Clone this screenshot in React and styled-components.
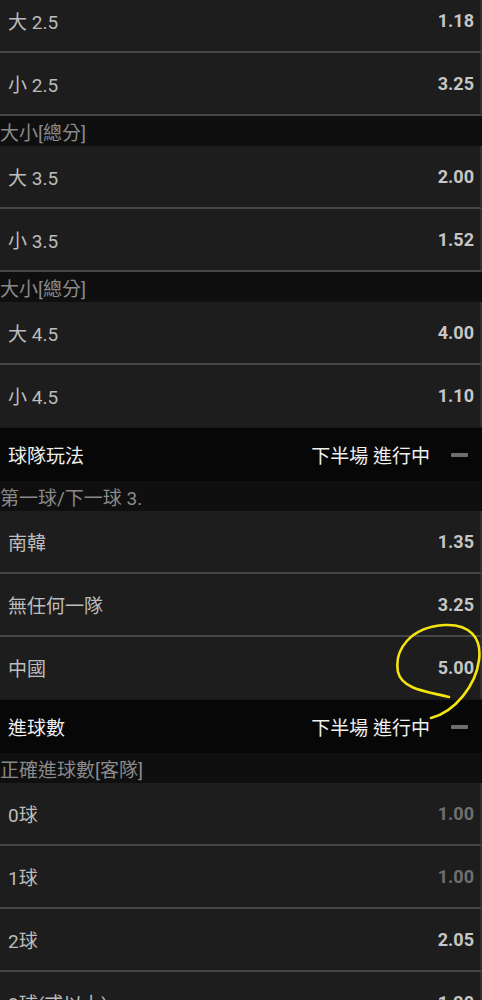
import React from 'react'
import styled, { createGlobalStyle } from 'styled-components'

const GlobalStyle = createGlobalStyle`
	body {
		margin: 0;
		background: #1d1d1d;
		font-family: Roboto, "Noto Sans CJK TC", "Noto Sans", sans-serif;
	}
`

const Page = styled.div`
	position: relative;
	width: 482px;
	height: 1000px;
	overflow: hidden;
	background: #1d1d1d;
`

const List = styled.div`
	margin-top: -10px;
	display: flex;
	flex-direction: column;
`

const Row = styled.div`
	display: flex;
	align-items: center;
	justify-content: space-between;
	height: 61px;
	padding: 0 6px 0 8px;
	background: #1d1d1d;
	border-bottom: 2px solid ${({ last }) => (last ? '#1a1a1a' : '#464646')};
	border-right: 2px solid #2e2e2e;
`

const Label = styled.span`
	font-size: 19px;
	color: #bcbcbc;
`

const Odds = styled.span`
	font-size: 18px;
	font-weight: 700;
	color: ${({ dim }) => (dim ? '#6f6f6f' : '#c6c6c6')};
`

const SubHeader = styled.div`
	display: flex;
	align-items: center;
	height: 30px;
	background: #0f0f0f;
	font-size: 19px;
	color: #8a8a8a;
`

const SectionHeader = styled.div`
	display: flex;
	align-items: center;
	height: 53px;
	padding: 0 14px 0 8px;
	background: #070707;
`

const SectionTitle = styled.span`
	flex: 1;
	font-size: 19px;
	color: #f0f0f0;
`

const Status = styled.span`
	font-size: 19px;
	color: #f0f0f0;
	margin-right: 21px;
`

const Collapse = styled.span`
	display: block;
	width: 17px;
	height: 4px;
	border-radius: 1px;
	background: #6e6e6e;
`

const Annotation = styled.svg`
	position: absolute;
	top: 0;
	left: 0;
	pointer-events: none;
`

const Market = ({ rows }) =>
	rows.map((r) => (
		<Row key={r[0]} last={r[3]}>
			<Label>{r[0]}</Label>
			<Odds dim={r[2]}>{r[1]}</Odds>
		</Row>
	))

const Section = ({ title }) => (
	<SectionHeader>
		<SectionTitle>{title}</SectionTitle>
		<Status>下半場 進行中</Status>
		<Collapse />
	</SectionHeader>
)

export default function App() {
	return (
		<Page>
			<GlobalStyle />
			<List>
				<Market rows={[['大 2.5', '1.18'], ['小 2.5', '3.25']]} />
				<SubHeader>大小[總分]</SubHeader>
				<Market rows={[['大 3.5', '2.00'], ['小 3.5', '1.52']]} />
				<SubHeader>大小[總分]</SubHeader>
				<Market rows={[['大 4.5', '4.00'], ['小 4.5', '1.10', false, true]]} />
				<Section title="球隊玩法" />
				<SubHeader>第一球/下一球 3.</SubHeader>
				<Market
					rows={[
						['南韓', '1.35'],
						['無任何一隊', '3.25'],
						['中國', '5.00', false, true],
					]}
				/>
				<Section title="進球數" />
				<SubHeader>正確進球數[客隊]</SubHeader>
				<Market
					rows={[
						['0球', '1.00', true],
						['1球', '1.00', true],
						['2球', '2.05'],
						['3球(或以上)', '1.20'],
					]}
				/>
			</List>
			<Annotation width="482" height="1000" viewBox="0 0 482 1000">
				<path
					d="M449 697 C430 692, 402 690, 398 672 C394 650, 410 627, 445 625 C470 624, 482 638, 479 660 C476 685, 455 712, 431 718"
					fill="none"
					stroke="#f4e410"
					strokeWidth="2.6"
					strokeLinecap="round"
				/>
			</Annotation>
		</Page>
	)
}
